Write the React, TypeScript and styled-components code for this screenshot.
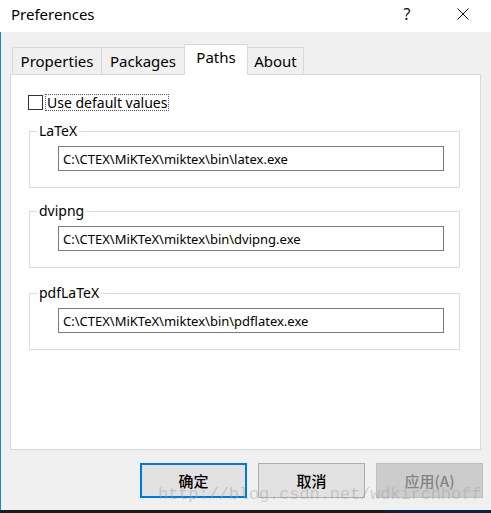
import React from "react";
import styled, { createGlobalStyle } from "styled-components";

const GlobalStyle = createGlobalStyle`
  html, body { margin: 0; padding: 0; background: #f0f0f0; }
  body { font-family: "Segoe UI", "Noto Sans", "Open Sans", sans-serif; }
`;

const Window = styled.div`
  position: relative;
  width: 491px;
  height: 513px;
  box-sizing: border-box;
  display: flex;
  flex-direction: column;
  background: #f0f0f0;
  overflow: hidden;
`;

const TitleBar = styled.div`
  height: 32px;
  flex: none;
  background: #ffffff;
  display: flex;
  align-items: center;
  gap: 10px;
  padding: 0 5px 0 11px;
  color: #000;
  font-size: 15px;
`;

const Title = styled.div`
  flex: 1;
  margin-top: -4px;
`;

const TitleButton = styled.div`
  width: 46px;
  height: 32px;
  display: flex;
  align-items: center;
  justify-content: center;
  font-size: 16px;
  color: #111;
  margin-top: -5px;
`;

const Body = styled.div`
  flex: 1;
  display: flex;
  flex-direction: column;
  border-left: 1px solid #1a86d9;
  padding: 12px 10px 0 9px;
`;

const TabRow = styled.div`
  display: flex;
  align-items: flex-end;
  height: 31px;
  padding-left: 2px;
  margin-bottom: -1px;
  position: relative;
  z-index: 1;
`;

const Tab = styled.div<{ $w: number; $active?: boolean }>`
  box-sizing: border-box;
  width: ${(p) => p.$w}px;
  height: ${(p) => (p.$active ? 31 : 27)}px;
  margin-bottom: ${(p) => (p.$active ? 0 : 1)}px;
  margin-left: -1px;
  border: 1px solid #d9d9d9;
  border-bottom: none;
  background: ${(p) => (p.$active ? "#ffffff" : "#f0f0f0")};
  font-size: 15px;
  color: #000;
  display: flex;
  justify-content: center;
  padding-top: ${(p) => (p.$active ? 2 : 3)}px;
  &:first-child { margin-left: 0; }
`;

const Panel = styled.div`
  height: 376px;
  box-sizing: border-box;
  flex: none;
  background: #ffffff;
  border: 1px solid #d9d9d9;
  padding: 19px 20px 0 17px;
  display: flex;
  flex-direction: column;
`;

const CheckRow = styled.label`
  display: flex;
  align-items: center;
  height: 16px;
  gap: 3px;
  font-size: 14px;
  color: #000;
`;

const CheckBox = styled.span`
  width: 13px;
  height: 13px;
  border: 1px solid #333333;
  background: #fff;
  flex: none;
`;

const FocusLabel = styled.span`
  outline: 1px dotted #555;
  outline-offset: 0;
  line-height: 15px;
  padding: 0 1px;
`;

const Group = styled.fieldset<{ $top: number }>`
  margin: ${(p) => p.$top}px 0 0 1px;
  padding: 7px 15px 16px 7px;
  border: 1px solid #dcdcdc;
  min-width: 0;
`;

const Legend = styled.legend`
  font-size: 14px;
  line-height: 16px;
  padding: 0 2px;
  margin-left: 0;
  color: #000;
`;

const PathInput = styled.div`
  box-sizing: border-box;
  height: 25px;
  margin-left: 21px;
  border: 1px solid #7a7a7a;
  background: #fff;
  font-size: 13px;
  padding-left: 4px;
  display: flex;
  align-items: center;
  color: #000;
`;

const ButtonRow = styled.div`
  display: flex;
  justify-content: flex-end;
  gap: 11px;
  margin-top: 13px;
  margin-right: -2px;
`;

const Button = styled.div<{ $variant?: "default" | "disabled" }>`
  box-sizing: border-box;
  width: 107px;
  height: 35px;
  display: flex;
  align-items: center;
  justify-content: center;
  font-family: "Noto Sans CJK SC", "Noto Sans", sans-serif;
  font-size: 15px;
  font-weight: 500;
  background: ${(p) => (p.$variant === "disabled" ? "#cccccc" : "#e1e1e1")};
  color: ${(p) => (p.$variant === "disabled" ? "#838383" : "#000")};
  border: ${(p) =>
    p.$variant === "default"
      ? "2px solid #0078d7"
      : p.$variant === "disabled"
      ? "1px solid #bfbfbf"
      : "1px solid #adadad"};
`;

const Spacer = styled.div`
  flex: 1;
`;

const Taskbar = styled.div`
  height: 3px;
  flex: none;
  display: flex;
`;

const TaskbarPart = styled.div<{ $color: string; $w?: number }>`
  background: ${(p) => p.$color};
  ${(p) => (p.$w ? `width: ${p.$w}px;` : "flex: 1;")}
`;

const Watermark = styled.div`
  position: absolute;
  left: 158px;
  top: 485px;
  font-family: "Liberation Mono", "DejaVu Sans Mono", monospace;
  font-size: 17px;
  letter-spacing: -0.1px;
  color: rgba(160, 160, 160, 0.45);
  pointer-events: none;
  white-space: nowrap;
`;

const CloseIcon = () => (
  <svg width="12" height="12" viewBox="0 0 12 12">
    <path d="M0.5 0.5 L11.5 11.5 M11.5 0.5 L0.5 11.5" stroke="#111" strokeWidth="1" fill="none" />
  </svg>
);

const groups = [
  { name: "LaTeX", path: "C:\\CTEX\\MiKTeX\\miktex\\bin\\latex.exe", top: 13 },
  { name: "dvipng", path: "C:\\CTEX\\MiKTeX\\miktex\\bin\\dvipng.exe", top: 15 },
  { name: "pdfLaTeX", path: "C:\\CTEX\\MiKTeX\\miktex\\bin\\pdflatex.exe", top: 17 },
];

export default function App() {
  return (
    <>
      <GlobalStyle />
      <Window>
        <TitleBar>
          <Title>Preferences</Title>
          <TitleButton>?</TitleButton>
          <TitleButton>
            <CloseIcon />
          </TitleButton>
        </TitleBar>
        <Body>
          <TabRow>
            <Tab $w={90}>Properties</Tab>
            <Tab $w={84}>Packages</Tab>
            <Tab $w={64} $active>
              Paths
            </Tab>
            <Tab $w={57}>About</Tab>
          </TabRow>
          <Panel>
            <CheckRow>
              <CheckBox />
              <FocusLabel>Use default values</FocusLabel>
            </CheckRow>
            {groups.map((g) => (
              <Group key={g.name} $top={g.top}>
                <Legend>{g.name}</Legend>
                <PathInput>{g.path}</PathInput>
              </Group>
            ))}
          </Panel>
          <ButtonRow>
            <Button $variant="default">确定</Button>
            <Button>取消</Button>
            <Button $variant="disabled">应用(A)</Button>
          </ButtonRow>
          <Spacer />
        </Body>
        <Taskbar>
          <TaskbarPart $color="#1c1c1c" $w={390} />
          <TaskbarPart $color="#0d2238" />
        </Taskbar>
        <Watermark>http://blog.csdn.net/wdkirchhoff</Watermark>
      </Window>
    </>
  );
}
